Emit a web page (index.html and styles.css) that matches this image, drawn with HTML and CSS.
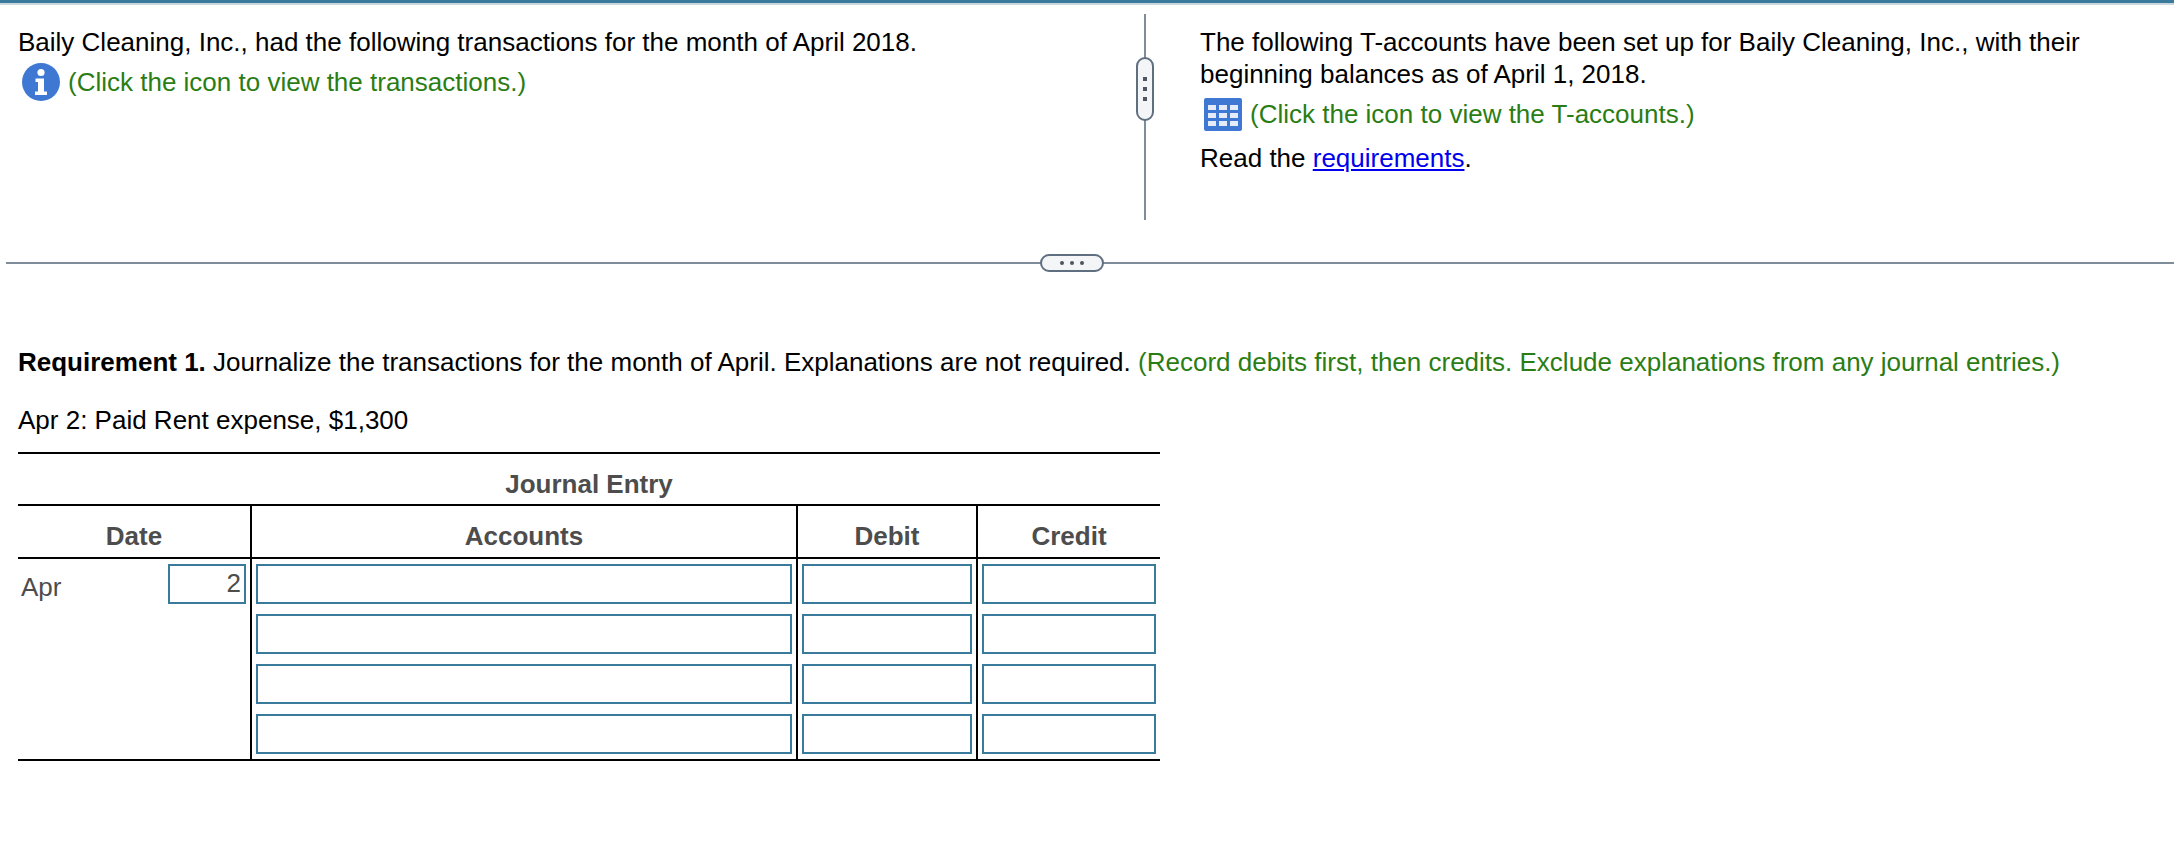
FILE: index.html
```html
<!DOCTYPE html>
<html lang="en">
<head>
<meta charset="utf-8">
<title>Journal Entry</title>
<link rel="stylesheet" href="styles.css">
</head>
<body>
<div class="topbar"></div>
<section class="panes">
  <div class="pane pane-left">
    <p class="line">Baily Cleaning, Inc., had the following transactions for the month of April 2018.</p>
    <p class="line hint">
      <svg class="icon-info" viewBox="0 0 38 38" aria-hidden="true">
        <circle cx="19" cy="19" r="19" fill="#3f78d2"/>
        <circle cx="19" cy="9.500" r="3.600" fill="#fff"/>
        <path d="M13.500 15.500h8.500v13h3v3.500h-12v-3.500h3v-9.500h-2.500z" fill="#fff"/>
      </svg>
      <span>(Click the icon to view the transactions.)</span>
    </p>
  </div>
  <div class="vsplit">
    <div class="vhandle"><i></i><i></i><i></i></div>
  </div>
  <div class="pane pane-right">
    <p class="line wrap">The following T-accounts have been set up for Baily Cleaning, Inc., with their beginning balances as of April 1, 2018.</p>
    <p class="line hint hint-grid">
      <svg class="icon-grid" viewBox="0 0 38 33" aria-hidden="true">
        <rect width="38" height="33" rx="2" fill="#3f78d2"/>
        <g fill="#e4ecfa">
          <rect x="4" y="7" width="8" height="5"/><rect x="15" y="7" width="8" height="5"/><rect x="26" y="7" width="8" height="5"/>
          <rect x="4" y="15" width="8" height="5"/><rect x="15" y="15" width="8" height="5"/><rect x="26" y="15" width="8" height="5"/>
          <rect x="4" y="23" width="8" height="5"/><rect x="15" y="23" width="8" height="5"/><rect x="26" y="23" width="8" height="5"/>
        </g>
      </svg>
      <span>(Click the icon to view the T-accounts.)</span>
    </p>
    <p class="line read">Read the <a href="#">requirements</a>.</p>
  </div>
</section>
<div class="hsplit"><div class="hhandle"><i></i><i></i><i></i></div></div>
<main class="content">
  <p class="req"><b>Requirement 1.</b> Journalize the transactions for the month of April. Explanations are not required. <span class="green">(Record debits first, then credits. Exclude explanations from any journal entries.)</span></p>
  <p class="sub">Apr 2: Paid Rent expense, $1,300</p>
  <table class="journal">
    <colgroup><col class="c-date"><col class="c-acct"><col class="c-debit"><col class="c-credit"></colgroup>
    <thead>
      <tr><th colspan="4" class="title">Journal Entry</th></tr>
      <tr class="heads"><th>Date</th><th>Accounts</th><th>Debit</th><th>Credit</th></tr>
    </thead>
    <tbody>
      <tr>
        <td class="date" rowspan="4"><div class="date-row"><span class="month">Apr</span><span class="box day">2</span></div></td>
        <td><div class="box"></div></td><td><div class="box"></div></td><td><div class="box"></div></td>
      </tr>
      <tr><td><div class="box"></div></td><td><div class="box"></div></td><td><div class="box"></div></td></tr>
      <tr><td><div class="box"></div></td><td><div class="box"></div></td><td><div class="box"></div></td></tr>
      <tr><td><div class="box"></div></td><td><div class="box"></div></td><td><div class="box"></div></td></tr>
    </tbody>
  </table>
</main>
</body>
</html>
```
FILE: styles.css
```css
* { box-sizing: border-box; }
html, body { margin: 0; padding: 0; background: #fff; }
body {
  font-family: "Liberation Sans", Arial, sans-serif;
  font-size: 26px;
  color: #000;
  overflow: hidden;
}
p { margin: 0; }
.topbar {
  height: 5px;
  background: #3a7a9c;
  border-bottom: 2px solid #c9d6de;
}
.panes {
  display: flex;
  height: 215px;
}
.pane { padding-top: 21px; }
.pane-left { width: 1144px; padding-left: 18px; }
.pane-right { flex: 1; padding-left: 54px; padding-right: 60px; }
.line { line-height: 33px; }
.wrap { width: 900px; line-height: 32px; }
.hint { color: #2a7d14; display: flex; align-items: center; margin-top: 4px; height: 38px; }
.icon-info { width: 38px; height: 38px; margin-left: 4px; margin-right: 8px; flex: none; }
.hint-grid { margin-top: 8px; height: 33px; }
.icon-grid { width: 38px; height: 33px; margin-left: 4px; margin-right: 8px; flex: none; }
.read { margin-top: 11px; }
.read a { color: #0000ee; text-decoration: underline; }
.vsplit {
  position: relative;
  width: 2px;
  margin-top: 9px;
  background: #7f8c9a;
}
.vhandle {
  position: absolute;
  left: -8px;
  top: 43px;
  width: 18px;
  height: 64px;
  border: 2px solid #5f6f80;
  border-radius: 9px;
  background: #f3f5f7;
  display: flex;
  flex-direction: column;
  align-items: center;
  justify-content: center;
  gap: 6px;
}
.vhandle i, .hhandle i { display: block; width: 4px; height: 4px; background: #4d5661; }
.hhandle i { border-radius: 50%; }
.hsplit {
  position: relative;
  margin: 42px 0 0 6px;
  height: 2px;
  background: #7f8c9a;
}
.hhandle {
  position: absolute;
  left: 1034px;
  top: -8px;
  width: 64px;
  height: 18px;
  border: 2px solid #5f6f80;
  border-radius: 9px;
  background: #f3f5f7;
  display: flex;
  align-items: center;
  justify-content: center;
  gap: 6px;
}
.content { padding: 0 18px; }
.req { margin-top: 82px; line-height: 33px; white-space: nowrap; }
.green { color: #2a7d14; }
.sub { margin-top: 25px; line-height: 33px; }
.journal {
  margin-top: 15px;
  width: 1142px;
  table-layout: fixed;
  border-collapse: collapse;
  border-top: 2px solid #000;
  border-bottom: 2px solid #000;
}
.c-date { width: 233px; }
.c-acct { width: 546px; }
.c-debit { width: 180px; }
.c-credit { width: 183px; }
.journal th { color: #4d4d4d; font-weight: bold; padding: 0; text-align: center; }
.journal .title { height: 52px; padding-top: 10px; }
.journal .heads th { height: 53px; border-top: 2px solid #000; border-bottom: 2px solid #000; padding-top: 10px; }
.journal .heads th + th { border-left: 2px solid #000; }
.journal td { padding: 5px 4px 5px 4px; height: 50px; border-left: 2px solid #000; vertical-align: top; }
.journal td.date { border-left: 0; padding: 5px 4px 0 3px; }
.box { height: 40px; border: 2px solid #3a7a9c; background: #fff; }
.date-row { display: flex; justify-content: space-between; }
.month { color: #4d4d4d; line-height: 47px; }
.day { width: 78px; color: #4d4d4d; text-align: right; padding-right: 3px; line-height: 34px; }
```
